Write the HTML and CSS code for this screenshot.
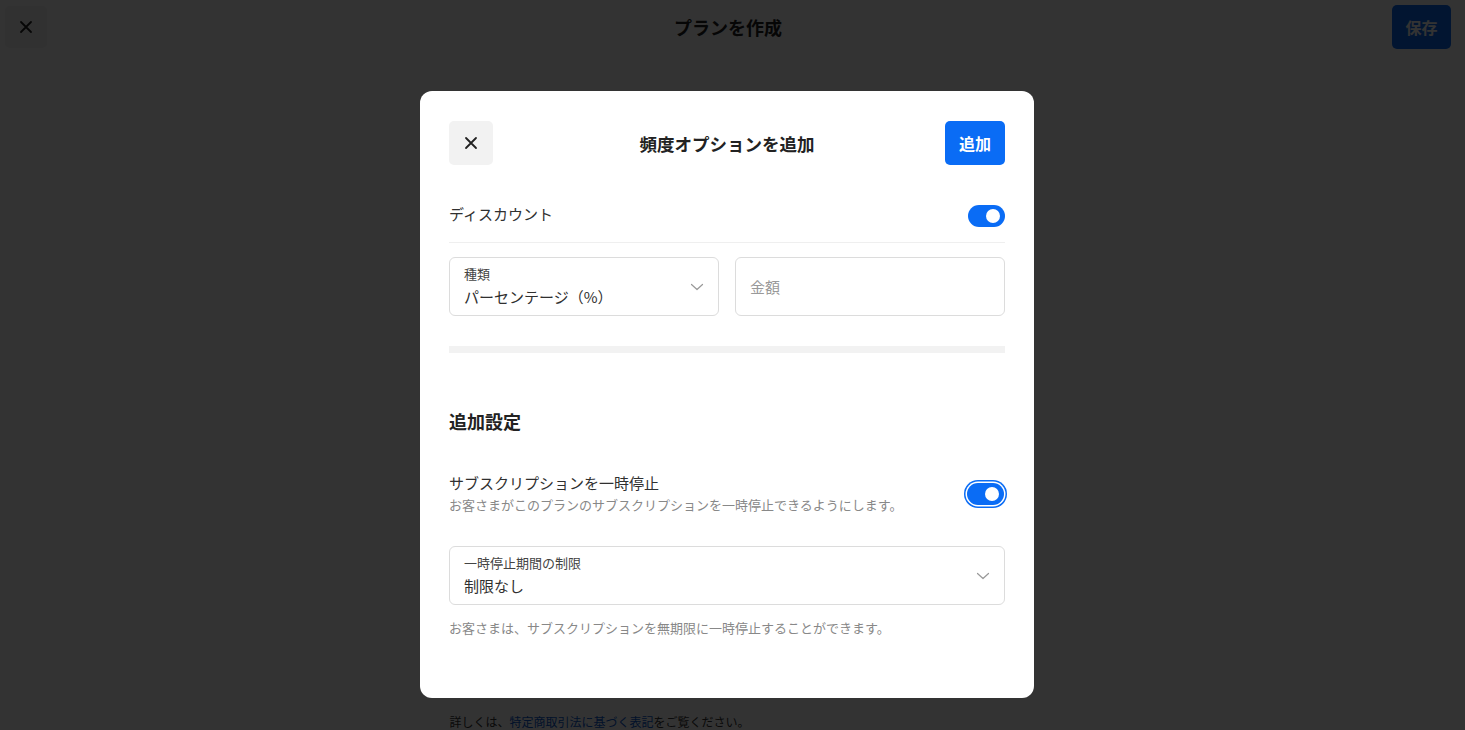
FILE: index.html
```html
<!DOCTYPE html>
<html lang="ja">
<head>
    <meta charset="utf-8">
    <title>プランを作成</title>
    <link rel="stylesheet" href="styles.css">
</head>
<body>
    <header class="topbar">
        <button class="icon-btn page-close" aria-label="閉じる">
            <svg width="14" height="14" viewBox="0 0 14 14"><path d="M2 2L12 12M12 2L2 12" stroke="#222" stroke-width="1.8" stroke-linecap="round"/></svg>
        </button>
        <h1 class="page-title">プランを作成</h1>
        <button class="primary-btn save-btn">保存</button>
    </header>
    <main class="page">
        <p class="page-note">詳しくは、<a href="#">特定商取引法に基づく表記</a>をご覧ください。</p>
    </main>

    <div class="overlay">
        <div class="modal">
            <div class="modal-head">
                <button class="icon-btn" aria-label="閉じる">
                    <svg width="14" height="14" viewBox="0 0 14 14"><path d="M2 2L12 12M12 2L2 12" stroke="#222" stroke-width="1.8" stroke-linecap="round"/></svg>
                </button>
                <h2 class="modal-title">頻度オプションを追加</h2>
                <button class="primary-btn add-btn">追加</button>
            </div>

            <div class="switch-row bordered">
                <span class="row-label">ディスカウント</span>
                <span class="toggle"></span>
            </div>

            <div class="field-grid">
                <div class="field">
                    <div class="field-text">
                        <span class="field-label">種類</span>
                        <span class="field-value">パーセンテージ（%）</span>
                    </div>
                    <svg class="chevron" width="14" height="8" viewBox="0 0 14 8"><path d="M1.5 1.5L7 6.5L12.5 1.5" fill="none" stroke="#999" stroke-width="1.2" stroke-linecap="round" stroke-linejoin="round"/></svg>
                </div>
                <div class="field">
                    <span class="placeholder">金額</span>
                </div>
            </div>

            <div class="divider"></div>

            <h3 class="section-title">追加設定</h3>

            <div class="switch-row pause-row">
                <div>
                    <div class="row-label">サブスクリプションを一時停止</div>
                    <div class="row-desc">お客さまがこのプランのサブスクリプションを一時停止できるようにします。</div>
                </div>
                <span class="toggle focused"></span>
            </div>

            <div class="field wide">
                <div class="field-text">
                    <span class="field-label">一時停止期間の制限</span>
                    <span class="field-value">制限なし</span>
                </div>
                <svg class="chevron" width="14" height="8" viewBox="0 0 14 8"><path d="M1.5 1.5L7 6.5L12.5 1.5" fill="none" stroke="#999" stroke-width="1.2" stroke-linecap="round" stroke-linejoin="round"/></svg>
            </div>

            <p class="help">お客さまは、サブスクリプションを無期限に一時停止することができます。</p>
        </div>
    </div>
</body>
</html>
```

FILE: styles.css
```css
body {
    margin: 0;
    background: #fff;
    color: #303030;
    font-family: "Noto Sans CJK JP", "Noto Sans", sans-serif;
}

button {
    font-family: inherit;
    border: none;
    cursor: pointer;
}

.topbar {
    display: grid;
    grid-template-columns: 1fr auto 1fr;
    align-items: center;
    padding: 5px 14px 0 5px;
    height: 44px;
}

.topbar .save-btn {
    justify-self: end;
}

.page-title {
    margin: 0;
    font-size: 18px;
    font-weight: 700;
    color: #222;
}

.icon-btn {
    width: 44px;
    height: 44px;
    border-radius: 5px;
    background: #f2f2f2;
    display: flex;
    align-items: center;
    justify-content: center;
    padding: 0;
}

.page-close {
    width: 42px;
    height: 42px;
}

.primary-btn {
    height: 44px;
    padding: 0 14px;
    border-radius: 5px;
    background: #0a6cf5;
    color: #fff;
    font-size: 16px;
    font-weight: 700;
}

.save-btn {
    width: 59px;
    padding: 0;
}

.add-btn {
    width: 60px;
    padding: 0;
    justify-self: end;
}

.page {
    width: 556px;
    margin: 0 auto;
    padding: 664px 10px 0 0;
}

.page-note {
    margin: 0;
    font-size: 12px;
    line-height: 18px;
    color: #333;
}

.page-note a {
    color: #0a5bd0;
    text-decoration: none;
}

.overlay {
    position: fixed;
    inset: 0;
    background: rgba(0, 0, 0, 0.8);
    display: flex;
    justify-content: center;
    align-items: flex-start;
    padding: 91px 11px 0 0;
}

.modal {
    width: 556px;
    background: #fff;
    border-radius: 12px;
    padding: 30px 29px 30px;
}

.modal-head {
    display: grid;
    grid-template-columns: 1fr auto 1fr;
    align-items: center;
}

.modal-title {
    margin: 0;
    font-size: 17.5px;
    font-weight: 700;
    color: #222;
}

.switch-row {
    display: flex;
    align-items: center;
    justify-content: space-between;
}

.bordered {
    margin-top: 28px;
    padding: 12px 0 15px;
    border-bottom: 1px solid #efefef;
}

.bordered .row-label {
    margin-top: -4px;
}

.row-label {
    font-size: 15px;
    line-height: 24px;
    color: #303030;
}

.row-desc {
    font-size: 13px;
    line-height: 20px;
    color: #888;
}

.toggle {
    position: relative;
    width: 37px;
    height: 22px;
    border-radius: 11px;
    background: #0a6cf5;
    flex: none;
}

.toggle::after {
    content: "";
    position: absolute;
    right: 5px;
    top: 4px;
    width: 14px;
    height: 14px;
    border-radius: 50%;
    background: #fff;
}

.toggle.focused {
    box-shadow: 0 0 0 1.5px #fff, 0 0 0 3px #0a6cf5;
    margin: 1px 1px 0 0;
}

.field-grid {
    display: grid;
    grid-template-columns: 1fr 1fr;
    gap: 16px;
    margin-top: 14px;
}

.field {
    height: 57px;
    border: 1px solid #dcdcdc;
    border-radius: 6px;
    display: flex;
    align-items: center;
    justify-content: space-between;
    padding: 0 14px;
}

.field-text {
    display: flex;
    flex-direction: column;
}

.field-label {
    font-size: 13px;
    line-height: 18px;
    color: #444;
}

.field-value {
    font-size: 15px;
    line-height: 24px;
    margin-top: 2px;
    color: #303030;
}

.placeholder {
    font-size: 15px;
    color: #999;
}

.divider {
    margin-top: 30px;
    height: 7px;
    background: #f2f2f2;
}

.section-title {
    margin: 55px 0 0;
    font-size: 18px;
    line-height: 26px;
    font-weight: 700;
    color: #222;
}

.pause-row {
    margin-top: 37px;
}

.wide {
    margin-top: 31px;
}

.help {
    margin: 13px 0 30px;
    font-size: 13px;
    line-height: 20px;
    color: #888;
}
```
